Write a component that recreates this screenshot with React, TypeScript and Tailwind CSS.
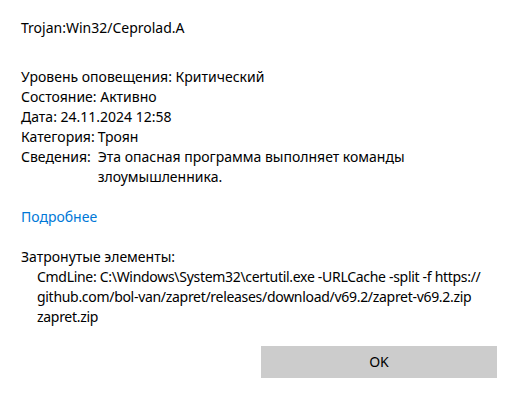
import React from "react";

export default function App() {
  return (
    <div
      className="w-[521px] h-[402px] bg-white text-black text-[14px] leading-[20px] overflow-hidden"
      style={{ fontFamily: '"Noto Sans", "Open Sans", sans-serif' }}
    >
      <div className="pl-[21px] pt-[18px] pr-[16px] flex flex-col">
        <div>Trojan:Win32/Ceprolad.A</div>
        <div className="mt-[29px]">Уровень оповещения: Критический</div>
        <div>Состояние: Активно</div>
        <div>Дата: 24.11.2024 12:58</div>
        <div className="grid grid-cols-[auto_1fr] gap-x-[3px]">
          <div>Категория:</div>
          <div>Троян</div>
          <div>Сведения:</div>
          <div className="w-[340px]">Эта опасная программа выполняет команды злоумышленника.</div>
        </div>
        <div className="mt-[20px] text-[#0078d7]">Подробнее</div>
        <div className="mt-[20px]">Затронутые элементы:</div>
        <div className="pl-[16px] whitespace-nowrap tracking-[-0.3px]">
          <div>CmdLine: C:\Windows\System32\certutil.exe -URLCache -split -f https://</div>
          <div>github.com/bol-van/zapret/releases/download/v69.2/zapret-v69.2.zip</div>
          <div>zapret.zip</div>
        </div>
        <div className="flex justify-end pr-[8px] mt-[19px]">
          <button className="w-[236px] h-[32px] bg-[#cccccc] text-black">OK</button>
        </div>
      </div>
    </div>
  );
}
